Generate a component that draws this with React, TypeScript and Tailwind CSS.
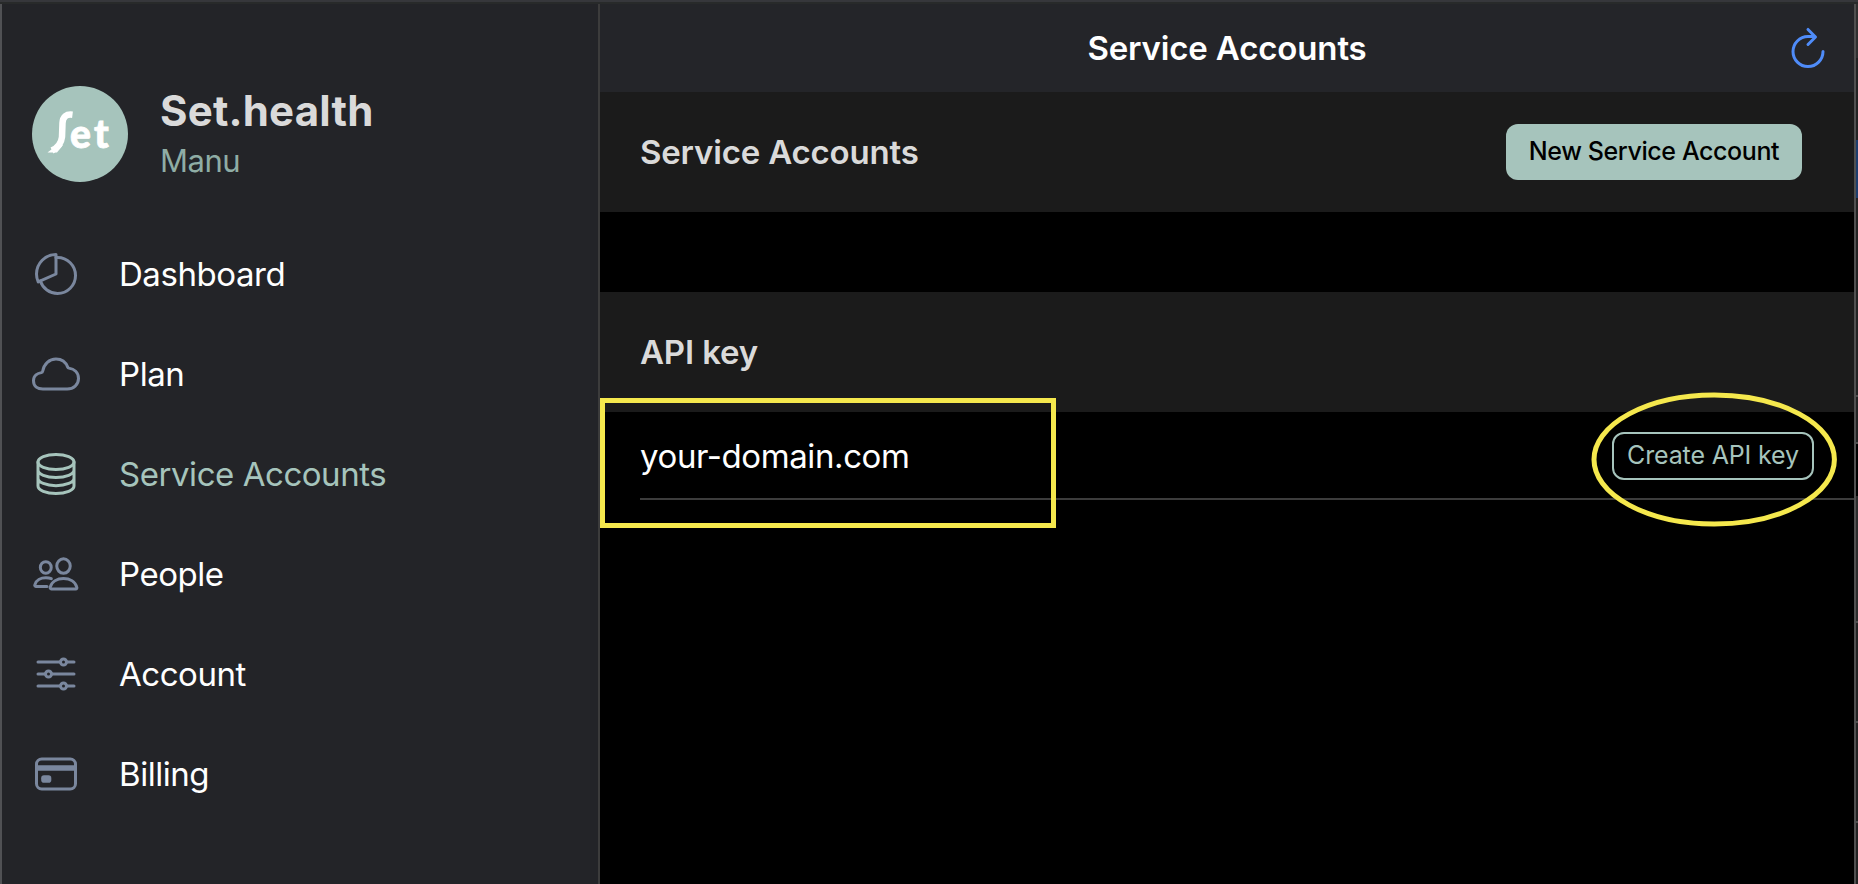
import React from "react";

const Pie = () => (
  <g>
    <path d="M256.05 80.65Q263.94 80 272 80c106 0 192 86 192 192s-86 192-192 192A192.09 192.09 0 0 1 89.12 330.65" />
    <path d="M256 48C141.12 48 48 141.12 48 256a207.3 207.3 0 0 0 18.09 85L256 256Z" />
  </g>
);
const Cloud = () => (
  <path d="M100.18 241.19a15.93 15.93 0 0 0 13.37-13.25C126.6 145.59 186.34 96 256 96c64.69 0 107.79 42.36 124.92 87a16.11 16.11 0 0 0 12.53 10.18C449.36 202.06 496 239.21 496 304c0 66-54 112-120 112H116c-55 0-100-27.44-100-88 0-54.43 43.89-80.81 84.18-86.81Z" />
);
const Layers = () => (
  <g>
    <ellipse cx="256" cy="128" rx="192" ry="80" />
    <path d="M448 214c0 44.180-86 80-192 80S64 258.180 64 214M448 300c0 44.180-86 80-192 80S64 344.180 64 300M64 128v256c0 44.180 86 80 192 80s192-35.820 192-80V128" />
  </g>
);
const People = () => (
  <g>
    <ellipse cx="336" cy="171" rx="72" ry="77" />
    <path d="M336 304c-66 0-126 31-142 92-2 10 2 20 12 20h260c10 0 15-10 12-20-16-61-76-92-142-92Z" />
    <ellipse cx="147" cy="186" rx="58" ry="62" />
    <path d="M206 306c-17-7-37-10-58-10-54 0-105 27-118 75-3 8 2 18 10 18h120" />
  </g>
);
const Sliders = () => (
  <g>
    <path d="M368 128h80M64 128h240M368 384h80M64 384h240M208 256h240M64 256h80" />
    <circle cx="336" cy="128" r="32" />
    <circle cx="176" cy="256" r="32" />
    <circle cx="336" cy="384" r="32" />
  </g>
);
const Card = () => (
  <g>
    <rect x="48" y="96" width="416" height="320" rx="56" />
    <path d="M48 192h416" strokeWidth="60" strokeLinejoin="round" strokeLinecap="butt" />
    <path d="M128 300h48v20h-48z" strokeWidth="60" />
  </g>
);

const items = [
  { label: "Dashboard", icon: <Pie />, active: false },
  { label: "Plan", icon: <Cloud />, active: false },
  { label: "Service Accounts", icon: <Layers />, active: true },
  { label: "People", icon: <People />, active: false },
  { label: "Account", icon: <Sliders />, active: false },
  { label: "Billing", icon: <Card />, active: false },
];

function Sidebar() {
  return (
    <aside className="flex w-[598px] shrink-0 flex-col border-l-2 border-[#505154] bg-[#232428] pt-[82px]">
      <div className="flex h-24 items-center pl-[30px]">
        <svg className="h-24 w-24 shrink-0" viewBox="0 0 96 96" fill="none">
          <circle cx="48" cy="48" r="48" fill="#a6c4bc" />
          <path d="M40.500 28.700Q31 27.500 30.500 37L30 51Q29 60 20 64.500" stroke="#fff" strokeWidth="6.500" />
          <path d="M15.500 66.500L25 66.500L31 59L24 60Z" fill="#fff" />
          <g fill="#fff" stroke="#fff" strokeWidth="0.8" fontFamily="Lato" fontWeight="900" fontSize="39">
            <text x="38" y="62">e</text>
            <text x="62" y="62">t</text>
          </g>
        </svg>
        <div className="ml-8 pt-0.5">
          <h1 className="text-[42px] leading-[48px] font-bold tracking-[0.2px] text-[#dadada]">Set.health</h1>
          <p className="mt-1 text-[31px] leading-[44px] tracking-[-0.5px] text-[#8fada5]">Manu</p>
        </div>
      </div>
      <nav className="mt-[42px]">
        {items.map((it) => (
          <a key={it.label} className={`flex h-[100px] items-center pl-[30px] text-[33px] ${it.active ? "text-[#a6c4bc]" : "text-white"}`}>
            <svg
              viewBox="0 0 512 512"
              className={`mr-[39px] h-12 w-12 shrink-0 ${it.active ? "text-[#a6c4bc]" : "text-[#7a879e]"}`}
              fill="none"
              stroke="currentColor"
              strokeWidth="32"
              strokeLinecap="round"
              strokeLinejoin="round"
            >
              {it.icon}
            </svg>
            <span className="pt-0.5 tracking-[-0.45px]">{it.label}</span>
          </a>
        ))}
      </nav>
    </aside>
  );
}

export default function App() {
  return (
    <div className="flex h-[884px] w-[1858px] flex-col overflow-hidden bg-black font-['Inter',sans-serif]">
      <div className="h-1 shrink-0 border-t-2 border-[#36373b] bg-[#282a2a]" />
      <div className="flex min-h-0 flex-1">
        <Sidebar />
        <main className="relative flex w-[1256px] shrink-0 flex-col border-l-2 border-[#3c3c3c]">
          <header className="flex h-[88px] shrink-0 items-center bg-[#242529]">
            <h2 className="flex-1 pt-0.5 text-center text-[33px] font-semibold tracking-[-0.15px] text-white">Service Accounts</h2>
            <svg className="absolute top-[20px] right-[22px] h-12 w-12" viewBox="0 0 512 512" fill="none" stroke="#4f8cf9" strokeWidth="32" strokeLinecap="round" strokeLinejoin="round">
              <path d="M320 134H256a160 160 0 1 0 160 160" />
              <path d="M256 58l80 80-80 80" />
            </svg>
          </header>
          <section className="flex h-[120px] shrink-0 items-center justify-between bg-[#1b1b1b] pr-[52px] pl-10">
            <h3 className="pt-0.5 text-[33px] font-semibold tracking-[-0.18px] text-[#dadada]">Service Accounts</h3>
            <button className="h-14 w-[296px] rounded-xl bg-[#a6c4bc] text-[25px] font-medium tracking-[-0.4px] whitespace-nowrap text-black">New Service Account</button>
          </section>
          <section className="mt-20 flex h-[120px] shrink-0 items-center bg-[#1b1b1b] pl-10">
            <h3 className="pt-0.5 text-[33px] font-semibold tracking-[-0.15px] text-[#dadada]">API key</h3>
          </section>
          <div className="ml-10 flex h-[88px] shrink-0 items-center justify-between border-b-2 border-[#3c3c3c] pr-10">
            <span className="pt-1 text-[33px] tracking-[-0.4px] text-white">your-domain.com</span>
            <button className="mt-0.5 h-12 w-[202px] rounded-xl border-2 border-[#a6c4bc] pb-px text-[25px] tracking-[-0.15px] whitespace-nowrap text-[#a6c4bc]">Create API key</button>
          </div>
          <div className="absolute top-[394px] left-0 h-[130px] w-[456px] border-[5px] border-[#f5e84d]" />
          <svg className="absolute top-[388px] left-[990px] h-[136px] w-[248px]" viewBox="0 0 248 136" fill="none">
            <ellipse cx="124.200" cy="67.500" rx="120.200" ry="64.500" stroke="#f5e84d" strokeWidth="5" />
          </svg>
        </main>
        <div className="flex flex-1 flex-col border-l-2 border-[#505050] bg-[#232323]">
          <div className="h-[54px] shrink-0 bg-[#303030]" />
          <div className="mt-[82px] h-[58px] shrink-0 bg-[#1d3d6d]" />
          <div className="mt-[197px] h-[49px] shrink-0 border-y-2 border-[#505050]" />
          <div className="h-[52px] shrink-0 bg-black" />
          <div className="h-[127px] shrink-0 border-b-2 border-[#505050] bg-[#2c2c2c]" />
          <div className="h-[100px] shrink-0 border-b-2 border-[#505050]" />
          <div className="h-[100px] shrink-0 border-b-2 border-[#505050]" />
        </div>
      </div>
    </div>
  );
}
